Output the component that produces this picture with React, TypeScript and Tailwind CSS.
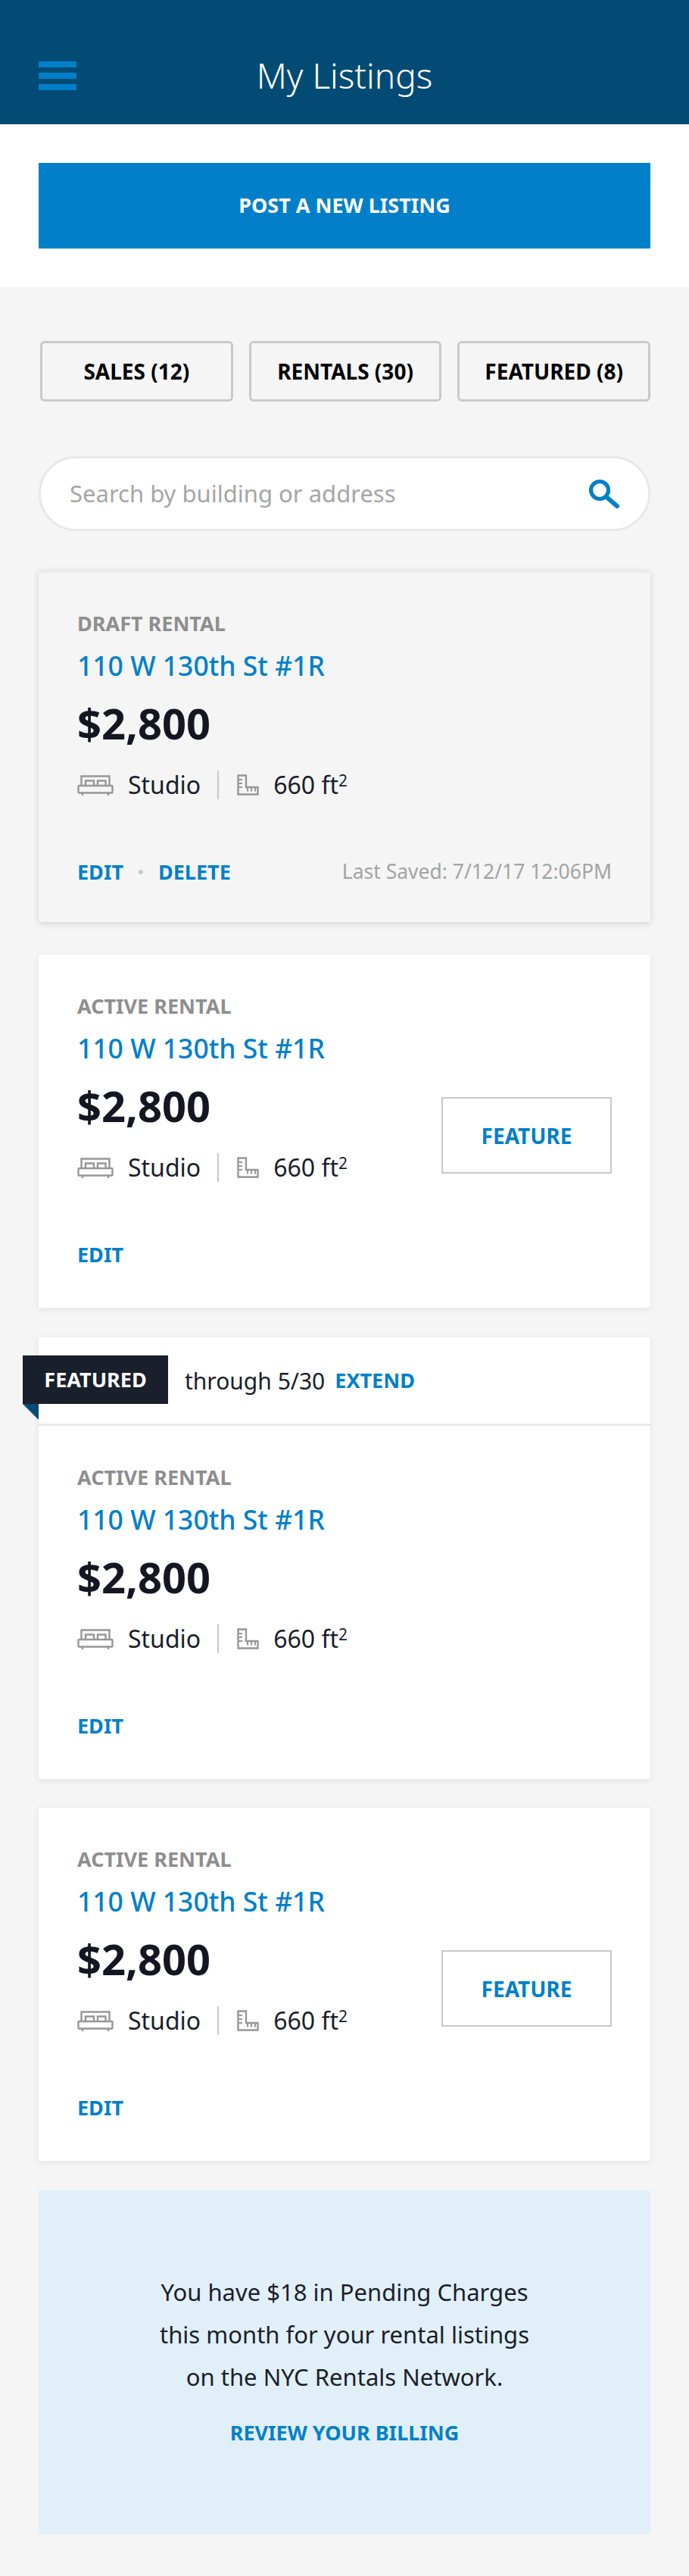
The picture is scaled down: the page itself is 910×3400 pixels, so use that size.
const font = "[font-family:'Noto_Sans','Liberation_Sans',sans-serif]";

function BedIcon() {
  return (
    <svg width="48" height="27" viewBox="0 0 48 27" fill="none" stroke="#979797" strokeWidth="2.4">
      <path d="M5.5 14V1.5h37V14" />
      <path d="M11 14V7.5h11V14M27 14V7.5h10.500V14" />
      <rect x="1.500" y="14" width="45" height="9.500" rx="1" />
      <path d="M7 23.500V27M41 23.500V27" />
    </svg>
  );
}

function RulerIcon() {
  return (
    <svg width="29" height="28" viewBox="0 0 29 28" fill="none" stroke="#979797" strokeWidth="2.4">
      <path d="M1.500 1.500h10.500v15.500h15.500v9.500h-26z" />
      <path d="M1.500 7h5.500M1.500 12h5.500M1.500 17h5.500M14 17v5.500M19 17v5.500M24 17v5.500" strokeWidth="2" />
    </svg>
  );
}

function SearchIcon() {
  return (
    <svg width="40" height="40" viewBox="0 0 40 40" fill="none" stroke="#0180c9" strokeWidth="5.200">
      <circle cx="14" cy="15" r="11.500" />
      <path d="M23 24l14 12" strokeLinecap="round" strokeWidth="6" />
    </svg>
  );
}

function Listing({ status, action, saved }: { status: string; action?: boolean; saved?: boolean }) {
  return (
    <div className={saved ? "flex items-start justify-between px-[51px] pt-[47px] pb-[46px]" : "flex items-start justify-between px-[51px] pt-[48px] pb-[50px]"}>
      <div className="flex-1">
        <div className="text-[27px] leading-[40px] font-bold text-[#8e8e8e]">{status}</div>
        <div className="mt-[11px] text-[35.500px] leading-[48px] font-medium text-[#0180c9]">110 W 130th St #1R</div>
        <div className="mt-[16px] text-[56px] leading-[72px] font-bold text-[#141722]">$2,800</div>
        <div className="mt-[24px] flex h-[44px] items-center text-[32px] text-[#1a1e2a]">
          <BedIcon />
          <span className="ml-[19px]">Studio</span>
          <span className="ml-[22px] mr-[24px] h-[38px] w-[2px] bg-[#c8c8c8]" />
          <RulerIcon />
          <span className="ml-[19px]">
            660 ft<sup className="text-[21px] leading-none">2</sup>
          </span>
        </div>
        <div className="mt-[73px] flex h-[40px] items-center text-[27px] font-bold text-[#0180c9]">
          <span>EDIT</span>
          {saved && <span className="mx-[20px] h-[6px] w-[6px] rounded-full bg-[#c8c8c8]" />}
          {saved && <span>DELETE</span>}
          {saved && <span className="ml-auto text-[26.500px] font-normal text-[#a3a3a3]">Last Saved: 7/12/17 12:06PM</span>}
        </div>
      </div>
      {action && (
        <div className="mt-[140px] flex h-[101px] w-[225px] items-center justify-center border-2 border-[#c8c8c8] text-[28px] font-bold text-[#0180c9]">
          FEATURE
        </div>
      )}
    </div>
  );
}

export default function App() {
  return (
    <div className={`${font} min-h-[3400px] w-[910px] bg-[#f5f5f5]`}>
      <header className="relative flex h-[164px] items-center justify-center bg-[#024b74] pt-[34px]">
        <div className="absolute left-[51px] top-[81px] flex w-[50px] flex-col gap-[7px]">
          <span className="h-[8px] bg-[#0180c9]" />
          <span className="h-[8px] bg-[#0180c9]" />
          <span className="h-[8px] bg-[#0180c9]" />
        </div>
        <h1 className="text-[46px] font-light text-white">My Listings</h1>
      </header>

      <div className="bg-white px-[51px] pt-[51px] pb-[51px]">
        <div className="flex h-[113px] items-center justify-center bg-[#0180c9] text-[27px] font-bold text-white">
          POST A NEW LISTING
        </div>
      </div>

      <div className="px-[51px] pt-[71px]">
        <div className="flex gap-[21px] pl-[2px]">
          {["SALES (12)", "RENTALS (30)", "FEATURED (8)"].map((t) => (
            <div key={t} className="flex h-[80px] flex-1 items-center justify-center rounded-[6px] border-[3px] border-[#c9c9c9] text-[28px] font-bold text-black">
              {t}
            </div>
          ))}
        </div>

        <div className="mt-[72px] flex h-[99px] items-center justify-between rounded-full border-[3px] border-[#e8e8e8] bg-white pl-[38px] pr-[38px]">
          <span className="text-[31px] text-[#a6a6a6]">Search by building or address</span>
          <SearchIcon />
        </div>

        <div className="mt-[52px] rounded-[3px] border-t-[3px] border-[#ebebeb] bg-[#f5f5f5] shadow-[0_2px_10px_rgba(0,0,0,0.14)]">
          <Listing status="DRAFT RENTAL" saved />
        </div>

        <div className="mt-[43px] rounded-[3px] bg-white shadow-[0_2px_10px_rgba(0,0,0,0.08)]">
          <Listing status="ACTIVE RENTAL" action />
        </div>

        <div className="mt-[39px] rounded-[3px] bg-white shadow-[0_2px_10px_rgba(0,0,0,0.08)]">
          <div className="relative flex h-[117px] items-center border-b-[3px] border-[#e9e9e9] pl-[193px]">
            <div className="absolute left-[-21px] top-[24px] flex h-[64px] w-[192px] items-center justify-center bg-[#1a1f2c] text-[27px] font-bold text-white">
              FEATURED
            </div>
            <div className="absolute left-[-21px] top-[88px] h-0 w-0 border-l-[21px] border-t-[21px] border-l-transparent border-t-[#024b74]" />
            <span className="text-[30px] text-[#1a1e2a]">through 5/30</span>
            <span className="ml-[13px] text-[27px] font-bold text-[#0180c9]">EXTEND</span>
          </div>
          <Listing status="ACTIVE RENTAL" />
        </div>

        <div className="mt-[38px] rounded-[3px] bg-white shadow-[0_2px_10px_rgba(0,0,0,0.08)]">
          <Listing status="ACTIVE RENTAL" action />
        </div>

        <div className="mt-[39px] flex h-[454px] flex-col items-center justify-center rounded-[3px] bg-[#e1eff8] pb-[8px] text-center">
          <p className="text-[31px] leading-[56px] text-[#1a1e2a]">
            You have $18 in Pending Charges
            <br />
            this month for your rental listings
            <br />
            on the NYC Rentals Network.
          </p>
          <div className="mt-[26px] text-[27px] font-bold text-[#0180c9]">REVIEW YOUR BILLING</div>
        </div>
      </div>
    </div>
  );
}
